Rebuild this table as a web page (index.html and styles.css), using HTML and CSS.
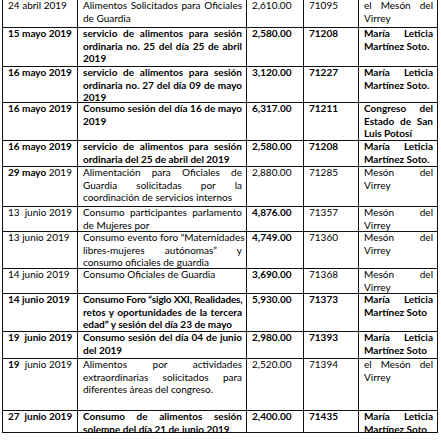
FILE: index.html
```html
<!DOCTYPE html>
<html lang="es">
<head>
<meta charset="utf-8">
<title>Consumos</title>
<link rel="stylesheet" href="styles.css">
</head>
<body>
<div class="grid">
  <div class="row">
    <div class="cell"><div class="tx">24 abril 2019</div></div>
    <div class="cell"><div class="tx"><span class="j">Alimentos Solicitados para Oficiales</span><span class="l">de Guardia</span></div></div>
    <div class="cell"><div class="tx">2,610.00</div></div>
    <div class="cell"><div class="tx">71095</div></div>
    <div class="cell"><div class="tx"><span class="j">el Mesón del</span><span class="l">Virrey</span></div></div>
  </div>
  <div class="row b">
    <div class="cell"><div class="tx">15 mayo 2019</div></div>
    <div class="cell"><div class="tx"><span class="j">servicio de alimentos para sesión</span><span class="j">ordinaria no. 25 del día 25 de abril</span><span class="l">2019</span></div></div>
    <div class="cell"><div class="tx">2,580.00</div></div>
    <div class="cell"><div class="tx">71208</div></div>
    <div class="cell"><div class="tx"><span class="j">María Leticia</span><span class="l">Martínez Soto.</span></div></div>
  </div>
  <div class="row b">
    <div class="cell"><div class="tx">16 mayo 2019</div></div>
    <div class="cell"><div class="tx"><span class="j">servicio de alimentos para sesión</span><span class="j">ordinaria no. 27 del día 09 de mayo</span><span class="l">2019</span></div></div>
    <div class="cell"><div class="tx">3,120.00</div></div>
    <div class="cell"><div class="tx">71227</div></div>
    <div class="cell"><div class="tx"><span class="j">María Leticia</span><span class="l">Martínez Soto.</span></div></div>
  </div>
  <div class="row b">
    <div class="cell"><div class="tx">16 mayo 2019</div></div>
    <div class="cell"><div class="tx"><span class="j">Consumo sesión del día 16 de mayo</span><span class="l">2019</span></div></div>
    <div class="cell"><div class="tx">6,317.00</div></div>
    <div class="cell"><div class="tx">71211</div></div>
    <div class="cell"><div class="tx"><span class="j">Congreso del</span><span class="j">Estado de San</span><span class="l">Luis Potosí</span></div></div>
  </div>
  <div class="row b">
    <div class="cell"><div class="tx">16 mayo 2019</div></div>
    <div class="cell"><div class="tx"><span class="j">servicio de alimentos para sesión</span><span class="l">ordinaria del 25 de abril del 2019</span></div></div>
    <div class="cell"><div class="tx">2,580.00</div></div>
    <div class="cell"><div class="tx">71208</div></div>
    <div class="cell"><div class="tx"><span class="j">María Leticia</span><span class="l">Martínez Soto.</span></div></div>
  </div>
  <div class="row">
    <div class="cell"><div class="tx"><strong>29 mayo</strong> 2019</div></div>
    <div class="cell"><div class="tx"><span class="j">Alimentación para Oficiales de</span><span class="j">Guardia solicitadas por la</span><span class="l">coordinación de servicios internos</span></div></div>
    <div class="cell"><div class="tx">2,880.00</div></div>
    <div class="cell"><div class="tx">71285</div></div>
    <div class="cell"><div class="tx"><span class="j">Mesón del</span><span class="l">Virrey</span></div></div>
  </div>
  <div class="row">
    <div class="cell"><div class="tx">13 &nbsp;junio 2019</div></div>
    <div class="cell"><div class="tx"><span class="j">Consumo participantes parlamento</span><span class="l">de Mujeres por</span></div></div>
    <div class="cell"><div class="tx"><strong>4,876.00</strong></div></div>
    <div class="cell"><div class="tx">71357</div></div>
    <div class="cell"><div class="tx"><span class="j">Mesón del</span><span class="l">Virrey</span></div></div>
  </div>
  <div class="row">
    <div class="cell"><div class="tx">13 junio 2019</div></div>
    <div class="cell"><div class="tx"><span class="j">Consumo evento foro “Maternidades</span><span class="j">libres-mujeres autónomas” y</span><span class="l">consumo oficiales de guardia</span></div></div>
    <div class="cell"><div class="tx"><strong>4,749.00</strong></div></div>
    <div class="cell"><div class="tx">71360</div></div>
    <div class="cell"><div class="tx"><span class="j">Mesón del</span><span class="l">Virrey</span></div></div>
  </div>
  <div class="row">
    <div class="cell"><div class="tx">14 junio 2019</div></div>
    <div class="cell"><div class="tx"><span class="l">Consumo Oficiales de Guardia</span></div></div>
    <div class="cell"><div class="tx"><strong>3,690.00</strong></div></div>
    <div class="cell"><div class="tx">71368</div></div>
    <div class="cell"><div class="tx"><span class="j">Mesón del</span><span class="l">Virrey</span></div></div>
  </div>
  <div class="row b">
    <div class="cell"><div class="tx">14 junio 2019</div></div>
    <div class="cell"><div class="tx"><span class="j tight">Consumo Foro “siglo XXI, Realidades,</span><span class="j">retos y oportunidades de la tercera</span><span class="l">edad” y sesión del día 23 de mayo</span></div></div>
    <div class="cell"><div class="tx">5,930.00</div></div>
    <div class="cell"><div class="tx">71373</div></div>
    <div class="cell"><div class="tx"><span class="j">María Leticia</span><span class="l">Martínez Soto</span></div></div>
  </div>
  <div class="row b">
    <div class="cell"><div class="tx">19 &nbsp;junio 2019</div></div>
    <div class="cell"><div class="tx"><span class="j">Consumo sesión del día 04 de junio</span><span class="l">del 2019</span></div></div>
    <div class="cell"><div class="tx">2,980.00</div></div>
    <div class="cell"><div class="tx">71393</div></div>
    <div class="cell"><div class="tx"><span class="j">María Leticia</span><span class="l">Martínez Soto</span></div></div>
  </div>
  <div class="row">
    <div class="cell"><div class="tx"><strong>19</strong> &nbsp;junio 2019</div></div>
    <div class="cell"><div class="tx"><span class="j">Alimentos por actividades</span><span class="j">extraordinarias solicitados para</span><span class="l">diferentes áreas del congreso.</span></div></div>
    <div class="cell"><div class="tx">2,520.00</div></div>
    <div class="cell"><div class="tx">71394</div></div>
    <div class="cell"><div class="tx"><span class="j">el Mesón del</span><span class="l">Virrey</span></div></div>
  </div>
  <div class="row b">
    <div class="cell"><div class="tx">27 &nbsp;junio 2019</div></div>
    <div class="cell"><div class="tx"><span class="j">Consumo de alimentos sesión</span><span class="l">solemne del día 21 de junio 2019</span></div></div>
    <div class="cell"><div class="tx">2,400.00</div></div>
    <div class="cell"><div class="tx">71435</div></div>
    <div class="cell"><div class="tx"><span class="j">María Leticia</span><span class="l">Martínez Soto</span></div></div>
  </div>
</div>
</body>
</html>
```
FILE: styles.css
```css
html, body {
  margin: 0;
  padding: 0;
  background: #ffffff;
}
body {
  font-family: Lato, "Noto Sans", sans-serif;
  font-size: 10px;
  line-height: 12.6px;
  color: #000;
}
.grid {
  display: grid;
  grid-template-columns: 74px 168px 56px 54px 78px;
  grid-template-rows: 27px 38px 35px 37px 25px 39px 24px 36px 24px 37px 26px 51px 21px;
  gap: 1px;
  padding: 1px;
  width: 434px;
  background: #111;
  margin: -1px 0 0 2px;
}
.row {
  display: contents;
}
.cell {
  background: #fff;
  padding: 0 4px 0 5px;
  white-space: nowrap;
  overflow: visible;
  min-width: 0;
}
.tx {
  margin-top: -1px;
}
.b .cell, strong { font-weight: 700; }
.j {
  display: block;
  text-align: justify;
  text-align-last: justify;
}
.tight { letter-spacing: -0.15px; }
.l { display: block; }
```
